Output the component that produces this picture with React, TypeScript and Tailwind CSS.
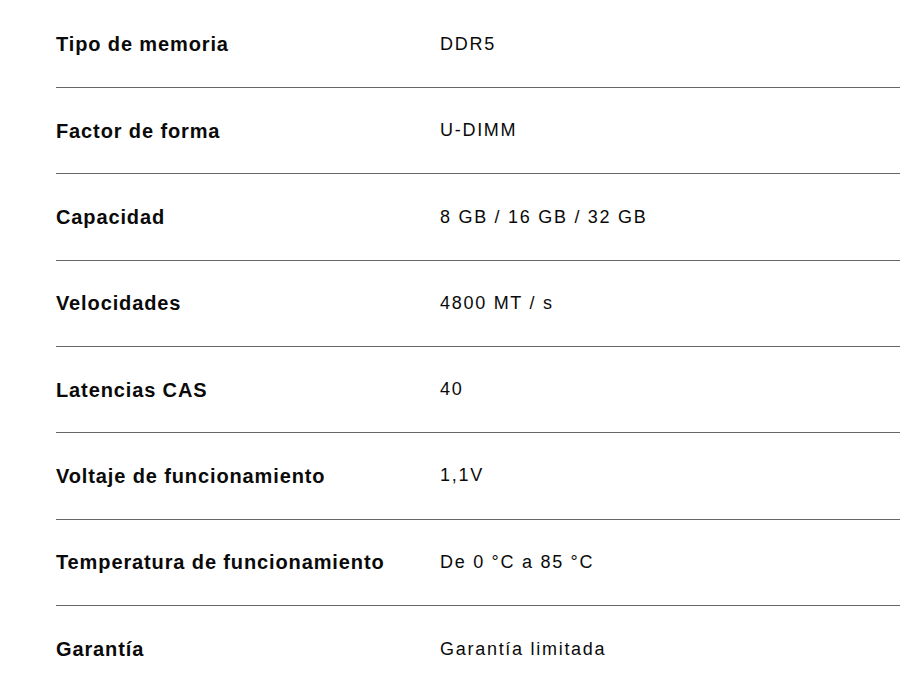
const specs = [
  { label: "Tipo de memoria", value: "DDR5" },
  { label: "Factor de forma", value: "U-DIMM" },
  { label: "Capacidad", value: "8 GB / 16 GB / 32 GB" },
  { label: "Velocidades", value: "4800 MT / s" },
  { label: "Latencias CAS", value: "40" },
  { label: "Voltaje de funcionamiento", value: "1,1V" },
  { label: "Temperatura de funcionamiento", value: "De 0 °C a 85 °C" },
  { label: "Garantía", value: "Garantía limitada" },
];

export default function App() {
  return (
    <div className="min-h-[686px] bg-white pl-[56px] pt-[1.7px] font-['Liberation_Sans',Arial,sans-serif] text-[#0a0a0a]">
      {specs.map(({ label, value }, i) => (
        <div
          key={label}
          className={
            "flex h-[86.33px] items-center " +
            (i < specs.length - 1 ? "border-b border-[#666]" : "")
          }
        >
          <div className="w-[384px] shrink-0 text-[20px] font-bold tracking-[0.88px]">{label}</div>
          <div className="text-[18px] tracking-[1.72px]">{value}</div>
        </div>
      ))}
    </div>
  );
}
